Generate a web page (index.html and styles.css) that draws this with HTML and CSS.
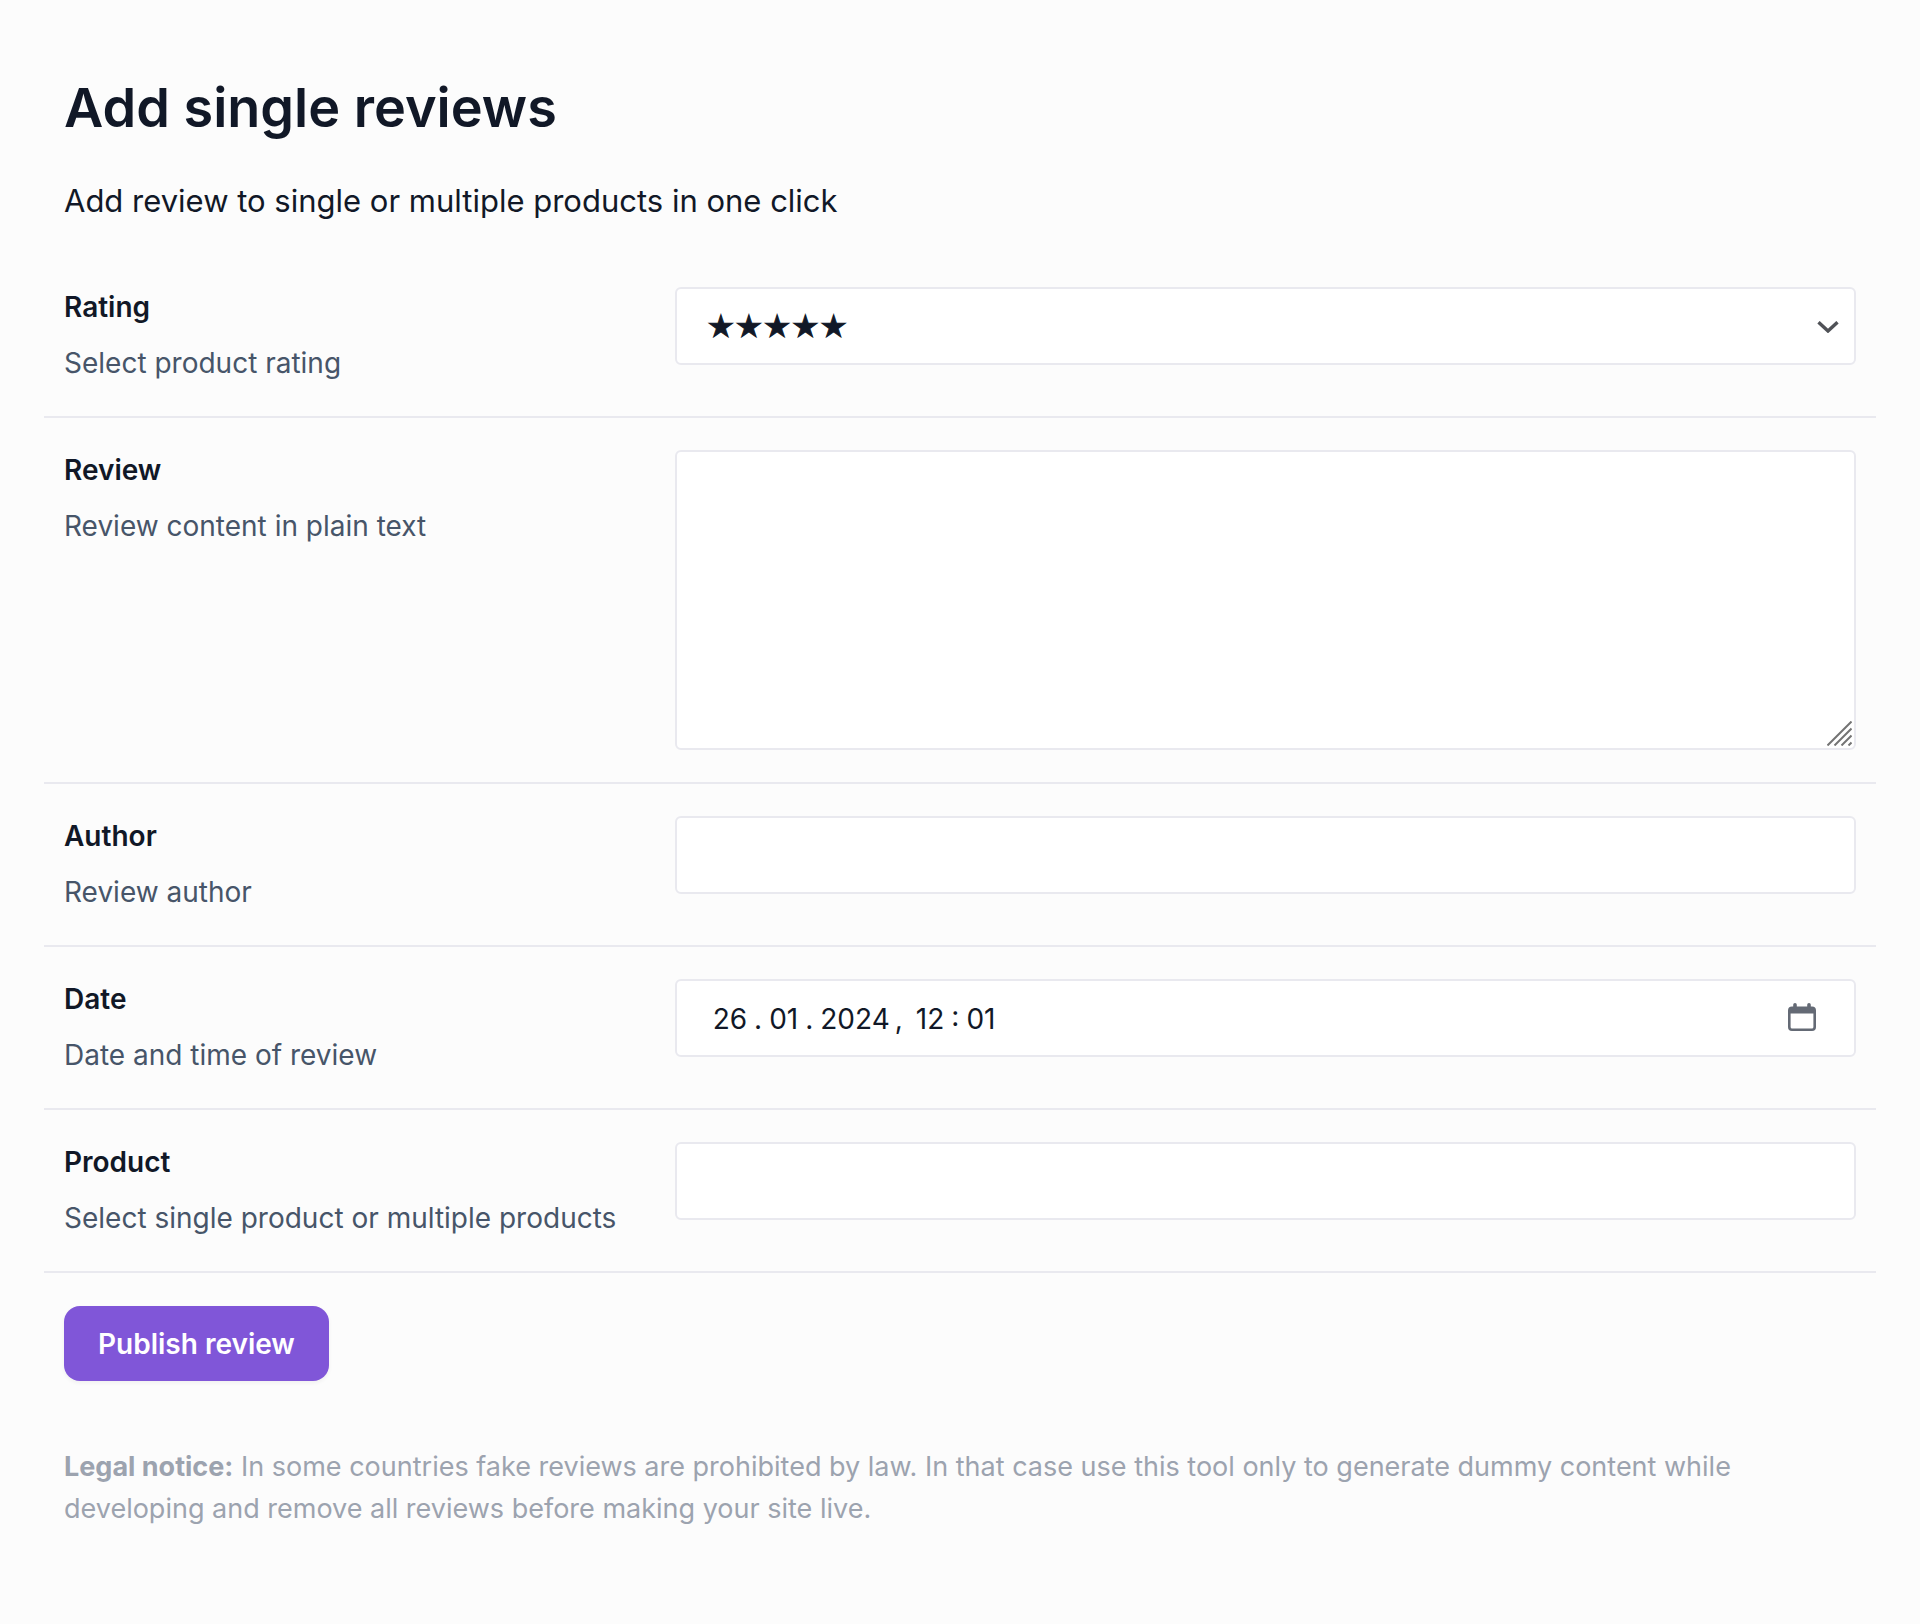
FILE: index.html
```html
<!DOCTYPE html>
<html lang="en">
<head>
<meta charset="utf-8">
<meta name="viewport" content="width=device-width, initial-scale=1">
<title>Add single reviews</title>
<link rel="stylesheet" href="styles.css">
</head>
<body>
<main class="page">
  <header class="intro">
    <h1 class="title">Add single reviews</h1>
    <p class="subtitle">Add review to single or multiple products in one click</p>
  </header>
  <form class="form">
    <div class="row">
      <div class="info">
        <label class="label" for="rating">Rating</label>
        <p class="hint">Select product rating</p>
      </div>
      <div class="field">
        <select class="control select" id="rating">
          <option>★★★★★</option>
          <option>★★★★</option>
          <option>★★★</option>
          <option>★★</option>
          <option>★</option>
        </select>
        <svg class="chevron" viewBox="0 0 22 12" aria-hidden="true"><path d="M1.500 1.200 11 10 20.500 1.200" fill="none" stroke="#505257" stroke-width="3.400"/></svg>
      </div>
    </div>
    <div class="row">
      <div class="info">
        <label class="label" for="review">Review</label>
        <p class="hint">Review content in plain text</p>
      </div>
      <div class="field">
        <textarea class="control textarea" id="review"></textarea>
        <svg class="grip" viewBox="0 0 25 25" aria-hidden="true"><path d="M.5 24.500 24.500.5M7.500 24.500 24.500 7.500M14.500 24.500 24.500 14.500M21.500 24.500 24.500 21.500" fill="none" stroke="#747474" stroke-width="2"/></svg>
      </div>
    </div>
    <div class="row">
      <div class="info">
        <label class="label" for="author">Author</label>
        <p class="hint">Review author</p>
      </div>
      <div class="field">
        <input class="control" id="author" type="text">
      </div>
    </div>
    <div class="row">
      <div class="info">
        <label class="label" for="date">Date</label>
        <p class="hint">Date and time of review</p>
      </div>
      <div class="field">
        <input class="control date" id="date" type="text" value="26&#8197;.&#8197;01&#8197;.&#8197;2024&#8201;,&#8201; 12&#8197;:&#8197;01">
        <button class="picker" type="button" aria-label="Open calendar">
          <svg class="calendar" viewBox="0 0 28 28" aria-hidden="true"><path fill="#646a75" fill-rule="evenodd" d="M5.200 3.500V1.800a1.800 1.800 0 0 1 3.600 0V3.500H19.200V1.800a1.800 1.800 0 0 1 3.600 0V3.500H24a4 4 0 0 1 4 4V24a4 4 0 0 1-4 4H4a4 4 0 0 1-4-4V7.500a4 4 0 0 1 4-4ZM2.600 10.500V24A1.500 1.500 0 0 0 4.100 25.500H23.900A1.500 1.500 0 0 0 25.400 24V10.500Z"/></svg>
        </button>
      </div>
    </div>
    <div class="row">
      <div class="info">
        <label class="label" for="product">Product</label>
        <p class="hint">Select single product or multiple products</p>
      </div>
      <div class="field">
        <input class="control" id="product" type="text">
      </div>
    </div>
    <div class="actions">
      <button class="submit" type="submit">Publish review</button>
    </div>
  </form>
  <p class="legal"><strong>Legal notice:</strong> In some countries fake reviews are prohibited by law. In that case use this tool only to generate dummy content while developing and remove all reviews before making your site live.</p>
</main>
</body>
</html>
```
FILE: styles.css
```css
*, *::before, *::after {
  box-sizing: border-box;
}

body {
  margin: 0;
  background: #fcfcfc;
  color: #111827;
  font-family: Inter, "Liberation Sans", sans-serif;
  font-size: 28px;
  line-height: 42px;
}

h1, p {
  margin: 0;
}

.page {
  padding: 72px 44px 92px;
}

.intro {
  padding: 0 20px 33px;
}

.title {
  margin-bottom: 36px;
  font-size: 54px;
  font-weight: 600;
  line-height: 72px;
}

.subtitle {
  font-size: 31px;
  line-height: 42px;
}

.row {
  display: grid;
  grid-template-columns: 1fr 2fr;
  border-bottom: 2px solid #e9e9ef;
}

.info {
  min-width: 0;
  padding: 32px 20px;
}

.field {
  position: relative;
  min-width: 0;
  padding: 32px 20px;
}

.label {
  display: block;
  margin-bottom: 15px;
  font-weight: 600;
  line-height: 40px;
}

.hint {
  color: #475569;
}

.control {
  display: block;
  width: 100%;
  height: 78px;
  padding: 0 32px;
  border: 2px solid #e9e9ef;
  border-radius: 6px;
  background: #fff;
  color: #111827;
  font: inherit;
}

.select {
  appearance: none;
  padding: 4px 30px 0;
  font-size: 27px;
  -webkit-text-stroke: 1px #111827;
}

.textarea {
  height: 300px;
  padding: 16px 32px;
  resize: none;
}

.date {
  padding: 2px 36px 0;
}

.chevron {
  position: absolute;
  top: 66px;
  right: 37px;
  width: 22px;
  height: 12px;
  pointer-events: none;
}

.grip {
  position: absolute;
  right: 24px;
  bottom: 36px;
  width: 25px;
  height: 25px;
  pointer-events: none;
}

.picker {
  position: absolute;
  top: 56px;
  right: 60px;
  padding: 0;
  border: 0;
  background: none;
}

.calendar {
  display: block;
  width: 28px;
  height: 28px;
}

.actions {
  padding: 33px 20px 65px;
}

.submit {
  display: block;
  height: 75px;
  padding: 0 34px;
  border: 0;
  border-radius: 16px;
  background: #8056d8;
  box-shadow: 0 2px 4px rgb(0 0 0 / 5%);
  color: #fff;
  font: inherit;
  font-weight: 600;
}

.legal {
  padding: 0 20px;
  color: #9ca3af;
  font-size: 27px;
}
```
